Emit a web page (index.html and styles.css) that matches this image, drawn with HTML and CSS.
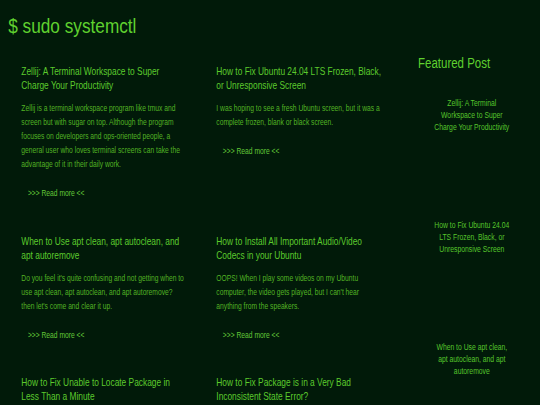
FILE: index.html
```html
<!DOCTYPE html>
<html lang="en">
<head>
    <meta charset="UTF-8">
    <meta name="viewport" content="width=device-width, initial-scale=1.0">
    <title>$ sudo systemctl</title>
    <link rel="stylesheet" href="styles.css">
</head>
<body>
  <div class="screen">
    <header class="site-header">
        <h1>$ sudo systemctl</h1>
    </header>

    <div class="page">
        <main class="posts">
            <article class="post">
                <h2 class="post-title">Zellij: A Terminal Workspace to Super Charge Your Productivity</h2>
                <p class="post-excerpt">Zellij is a terminal workspace program like tmux and screen but with sugar on top. Although the program focuses on developers and ops-oriented people, a general user who loves terminal screens can take the advantage of it in their daily work.</p>
                <a class="read-more" href="#">&gt;&gt;&gt; Read more &lt;&lt;</a>
            </article>
            <article class="post">
                <h2 class="post-title">How to Fix Ubuntu 24.04 LTS Frozen, Black, or Unresponsive Screen</h2>
                <p class="post-excerpt">I was hoping to see a fresh Ubuntu screen, but it was a complete frozen, blank or black screen.</p>
                <a class="read-more" href="#">&gt;&gt;&gt; Read more &lt;&lt;</a>
            </article>
            <article class="post">
                <h2 class="post-title">When to Use apt clean, apt autoclean, and apt autoremove</h2>
                <p class="post-excerpt">Do you feel it's quite confusing and not getting when to use apt clean, apt autoclean, and apt autoremove? then let's come and clear it up.</p>
                <a class="read-more" href="#">&gt;&gt;&gt; Read more &lt;&lt;</a>
            </article>
            <article class="post">
                <h2 class="post-title">How to Install All Important Audio/Video Codecs in your Ubuntu</h2>
                <p class="post-excerpt">OOPS! When I play some videos on my Ubuntu computer, the video gets played, but I can't hear anything from the speakers.</p>
                <a class="read-more" href="#">&gt;&gt;&gt; Read more &lt;&lt;</a>
            </article>
            <article class="post">
                <h2 class="post-title">How to Fix Unable to Locate Package in Less Than a Minute</h2>
            </article>
            <article class="post">
                <h2 class="post-title">How to Fix Package is in a Very Bad Inconsistent State Error?</h2>
            </article>
        </main>

        <aside class="sidebar">
            <h3 class="sidebar-title">Featured Post</h3>
            <a class="featured" href="#">Zellij: A Terminal Workspace to Super Charge Your Productivity</a>
            <a class="featured" href="#">How to Fix Ubuntu 24.04 LTS Frozen, Black, or Unresponsive Screen</a>
            <a class="featured" href="#">When to Use apt clean, apt autoclean, and apt autoremove</a>
        </aside>
    </div>
  </div>
</body>
</html>
```

FILE: styles.css
```css
body {
    font-family: "Liberation Sans", Arial, sans-serif;
    margin: 0;
    padding: 0;
    background-color: #011a09;
    color: #4fae22;
    overflow: hidden;
}
a {
    text-decoration: none;
}
/* the theme uses a narrow face; squeeze the whole sheet to get it */
.screen {
    width: 658px;
    transform: scaleX(0.82);
    transform-origin: 0 0;
}
.site-header {
    padding: 14px 10px 0;
}
.site-header h1 {
    margin: 0;
    font-size: 21px;
    font-weight: normal;
    line-height: 24px;
    color: #5fd12f;
}
.page {
    display: flex;
    padding-top: 27px;
}
.posts {
    display: grid;
    grid-template-columns: 202.5px 205px;
    column-gap: 35.3px;
    align-items: start;
    padding: 0 24px 0 26px;
}
.post {
    padding-bottom: 29px;
}
.post-title {
    margin: 0;
    font-size: 10.2px;
    font-weight: normal;
    line-height: 14px;
    color: #5ccb2d;
}
.post-excerpt {
    margin: 9px 0 0;
    font-size: 8.2px;
    line-height: 14px;
    color: #52b324;
}
.read-more {
    display: block;
    margin-top: 15px;
    padding-left: 8px;
    font-size: 8.2px;
    line-height: 14px;
    color: #62c838;
}
.sidebar {
    flex: 1;
    display: flex;
    flex-direction: column;
    align-items: center;
}
.sidebar-title {
    align-self: flex-start;
    margin: -11px 0 0 17px;
    font-size: 14px;
    font-weight: normal;
    line-height: 18px;
    color: #5fd12f;
}
.featured {
    display: block;
    width: 95px;
    margin-top: 25px;
    margin-bottom: 61px;
    font-size: 8.3px;
    line-height: 12px;
    text-align: center;
    color: #56c52c;
}
```
